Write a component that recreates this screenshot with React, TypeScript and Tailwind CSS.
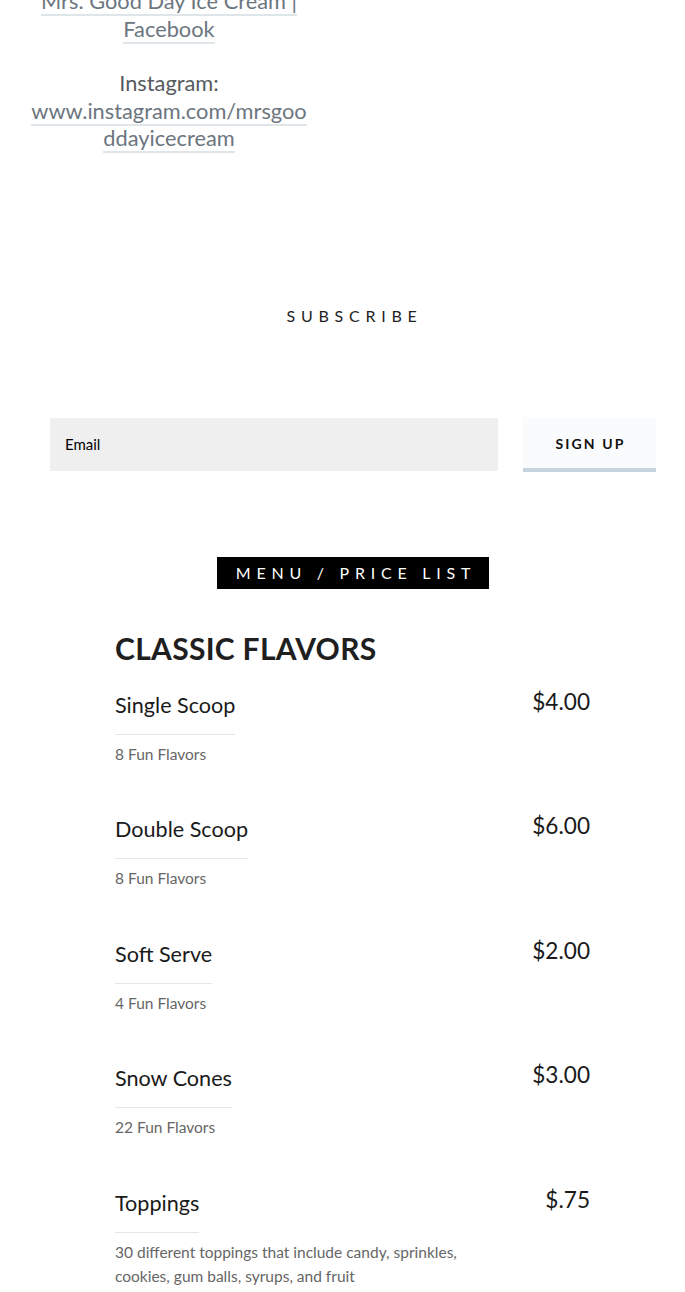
const items = [
  { name: "Single Scoop", price: "$4.00", desc: "8 Fun Flavors" },
  { name: "Double Scoop", price: "$6.00", desc: "8 Fun Flavors" },
  { name: "Soft Serve", price: "$2.00", desc: "4 Fun Flavors" },
  { name: "Snow Cones", price: "$3.00", desc: "22 Fun Flavors" },
  {
    name: "Toppings",
    price: "$.75",
    desc: "30 different toppings that include candy, sprinkles, cookies, gum balls, syrups, and fruit",
  },
];

const link = "text-[#6c7680] border-b-2 border-[#dfe6ea] no-underline";

export default function App() {
  return (
    <div className="bg-white w-[685px] h-[1292px] overflow-hidden font-['Lato','Open_Sans',sans-serif]">
      {/* social links column */}
      <div className="w-[280px] ml-[29px] -mt-[13px] text-center text-[21.8px] leading-[27.5px] text-[#555b60]">
        <p>
          <a className={link}>Mrs. Good Day Ice Cream | Facebook</a>
        </p>
        <p className="mt-[27px]">Instagram:</p>
        <p className="break-all">
          <a className={link}>www.instagram.com/mrsgooddayicecream</a>
        </p>
      </div>

      <h2 className="mt-[152px] ml-[24px] text-center text-[16px] leading-[24px] tracking-[0.36em] text-[#222]">
        SUBSCRIBE
      </h2>

      <form className="mt-[89px] ml-[50px] flex items-start gap-[25px]">
        <div className="w-[448px] h-[53px] mt-[1px] bg-[#efefef] flex items-center pl-[15px] text-[15px] text-black">
          Email
        </div>
        <button
          type="button"
          className="w-[133px] h-[55px] bg-[#f9fbfc] border-b-[4px] border-[#c4d4df] text-[14px] font-bold tracking-[0.15em] text-[#111] pt-[2px] pl-[2px]"
        >
          SIGN UP
        </button>
      </form>

      <div className="mt-[85px] flex justify-center pl-[21px]">
        <div className="bg-black text-white w-[272px] h-[32px] flex items-center justify-center text-[16px] tracking-[0.36em] pl-[6px]">
          MENU / PRICE LIST
        </div>
      </div>

      <div className="ml-[115px] w-[475px]">
        <h3 className="mt-[41px] text-[30px] leading-[36px] font-bold tracking-[0.01em] text-[#1f1f1f]">
          CLASSIC FLAVORS
        </h3>
        <div className="flex flex-col gap-[48.5px] mt-[24px]">
          {items.map((it) => (
            <div key={it.name} className="flex justify-between items-start">
              <div>
                <div className="inline-block text-[21.6px] leading-[30px] text-[#1a1a1a] pb-[14px] border-b border-[#e6e6e6]">
                  {it.name}
                </div>
                <p className="mt-[7px] w-[360px] text-[15.5px] leading-[24px] text-[#666]">{it.desc}</p>
              </div>
              <div className="text-[22.6px] leading-[30px] text-[#1a1a1a] -mt-[3px]">{it.price}</div>
            </div>
          ))}
        </div>
      </div>
    </div>
  );
}
